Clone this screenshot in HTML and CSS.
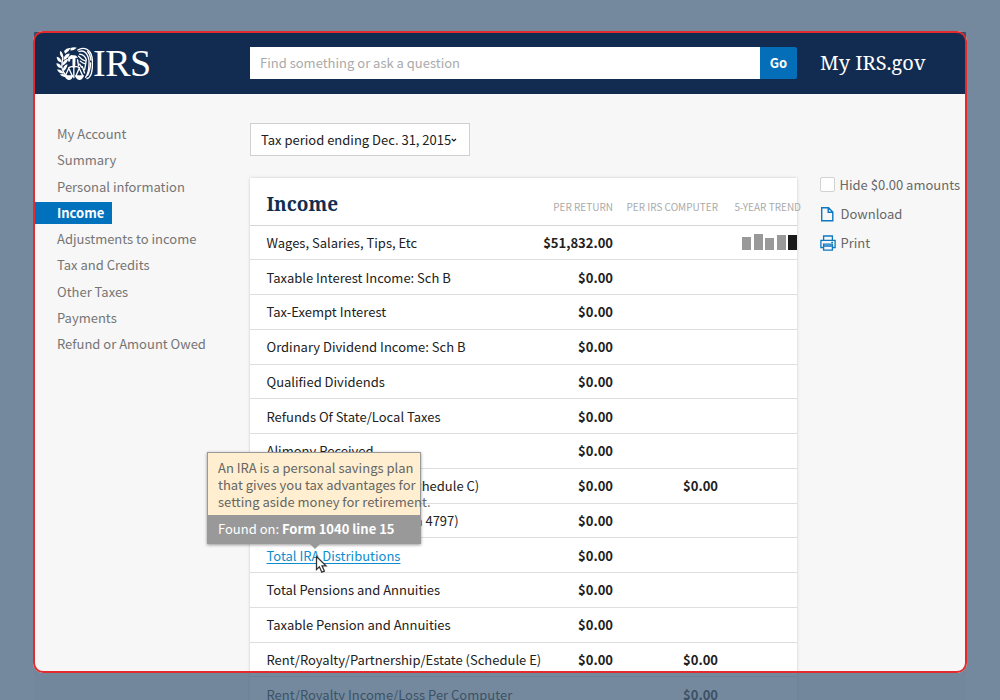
FILE: index.html
```html
<!DOCTYPE html>
<html lang="en">
<head>
<meta charset="utf-8">
<title>My IRS.gov – Income</title>
<link rel="stylesheet" href="styles.css">
</head>
<body>
<div class="page">
  <header class="header">
    <div class="logo">
      <svg class="eagle" viewBox="0 0 110 98" aria-hidden="true">
        <g fill="#fff">
          <path d="M43 3Q53-1 62 2Q53 11 43 10Z"/><path d="M24 12Q32 1 43 3Q39 14 27 20Z"/>
          <path d="M12 12Q23 17 21 34Q9 27 12 12Z"/><path d="M2 29Q14 31 18 46Q3 46 2 29Z"/>
          <path d="M1 48Q13 48 19 62Q3 64 1 48Z"/><path d="M3 67Q14 64 25 78Q10 82 3 67Z"/>
          <path d="M23 32Q28 19 41 19Q39 32 22 39Z"/><path d="M19 50Q24 37 36 35Q35 47 19 56Z"/>
          <path d="M20 66Q24 53 34 51Q34 62 23 72Z"/><path d="M11 82Q24 77 35 86Q24 94 11 82Z"/>
          <path d="M36 31L45 24L59 25L65 32L58 33L57 61H49V35L42 36V43H36Z"/>
        </g>
        <g fill="none" stroke="#fff" stroke-width="4" stroke-linecap="round">
          <path d="M65 9Q78 0 92 7Q104 14 107 30Q111 55 105 79Q101 91 92 94"/>
          <path d="M68 13Q84 8 92 22Q100 35 98 55Q97 77 88 90"/>
          <path d="M70 21Q85 22 90 37Q88 55 85 67"/>
          <path d="M67 27Q76 38 87 41M72 42Q78 48 87 50M94 13Q102 22 104 39M103 47Q101 70 94 84"/>
          <path d="M20 29L17 60Q22 79 33 87"/>
          <path d="M38 61Q53 54 70 61M53 56V91M38 63L27 87M38 63L49 87M69 63L59 87M69 63L80 87"/>
          <path d="M64 38L67 56M70 51L76 60M78 58L85 77"/>
        </g>
        <path fill="#fff" d="M25 84H51Q49 98 38 98Q28 97 25 84ZM57 84H83Q80 98 69 98Q59 97 57 84Z"/>
      </svg>
      <span class="logo-text">IRS</span>
    </div>
    <form class="search"><span class="search-field">Find something or ask a question</span><span class="go">Go</span></form>
    <div class="site-name">My IRS.gov</div>
  </header>
  <div class="columns">
    <nav class="nav">
      <a>My Account</a><a>Summary</a><a>Personal information</a><a class="active">Income</a><a>Adjustments to income</a><a>Tax and Credits</a><a>Other Taxes</a><a>Payments</a><a>Refund or Amount Owed</a>
    </nav>
    <main class="main">
      <div class="period"><span>Tax period ending Dec. 31, 2015</span>
        <svg width="14" height="10" viewBox="0 0 14 10"><path d="M1.8 2.2L7 7.2L12.2 2.2" fill="none" stroke="#111" stroke-width="3"/></svg>
      </div>
      <section class="card">
        <div class="card-head"><h1>Income</h1><span>PER RETURN</span><span>PER IRS COMPUTER</span><span>5-YEAR TREND</span></div>
        <div class="row"><span>Wages, Salaries, Tips, Etc</span><b>$51,832.00</b><b></b>
          <i class="trend"><i class="bar h1"></i><i class="bar h2"></i><i class="bar h3"></i><i class="bar h4"></i><i class="bar h4 now"></i></i></div>
        <div class="row"><span>Taxable Interest Income: Sch B</span><b>$0.00</b></div>
        <div class="row"><span>Tax-Exempt Interest</span><b>$0.00</b></div>
        <div class="row"><span>Ordinary Dividend Income: Sch B</span><b>$0.00</b></div>
        <div class="row"><span>Qualified Dividends</span><b>$0.00</b></div>
        <div class="row"><span>Refunds Of State/Local Taxes</span><b>$0.00</b></div>
        <div class="row"><span>Alimony Received</span><b>$0.00</b></div>
        <div class="row"><span>Business Income/Loss (Schedule C)</span><b>$0.00</b><b>$0.00</b></div>
        <div class="row"><span>Other Gains/Losses (Form 4797)</span><b>$0.00</b></div>
        <div class="row"><span class="link">Total IRA Distributions</span><b>$0.00</b></div>
        <div class="row"><span>Total Pensions and Annuities</span><b>$0.00</b></div>
        <div class="row"><span>Taxable Pension and Annuities</span><b>$0.00</b></div>
        <div class="row"><span>Rent/Royalty/Partnership/Estate (Schedule E)</span><b>$0.00</b><b>$0.00</b></div>
        <div class="row"><span>Rent/Royalty Income/Loss Per Computer</span><b></b><b>$0.00</b></div>
      </section>
    </main>
    <aside class="tools">
      <div class="tool"><i class="check"></i>Hide $0.00 amounts</div>
      <div class="tool"><svg width="16" height="16" viewBox="0 0 16 16" fill="none" stroke="#0e78c2" stroke-width="1.4"><path d="M1.7 1.7H8.5L12.8 6V14.8H1.7ZM8.2 1.7V6.2H12.8"/></svg>Download</div>
      <div class="tool"><svg width="16" height="16" viewBox="0 0 16 16" fill="none" stroke="#0e78c2" stroke-width="1.3"><path d="M3.6 5V1H12.4V5M3.6 12.5H.9V5.3H15.1V12.5H12.4M3.6 9.1H12.4V15.2H3.6ZM3.6 11H12.4M11.3 7.3H13"/></svg>Print</div>
    </aside>
  </div>
  <div class="tooltip">
    <div class="tip-body">An IRA is a personal savings plan<br>that gives you tax advantages for<br>setting aside money for retirement.</div>
    <div class="tip-foot">Found on: <b>Form 1040 line 15</b></div>
  </div>
  <svg class="cursor" width="14" height="20" viewBox="0 0 14 20"><path d="M1.5 1.5V14.5L4.4 11.8L6.8 17.2L9.4 16.1L7 10.8H11Z" fill="#fff" stroke="#333" stroke-width="1.3"/></svg>
  <div class="frame"></div>
</div>
</body>
</html>
```

FILE: styles.css
```css
* { box-sizing: border-box; }
body { margin: 0; background: #fff; font: 13px/17px "Noto Sans CJK SC", "Noto Sans", sans-serif; color: #212121; }
.page { position: relative; width: 1000px; height: 700px; overflow: hidden; padding: 32px 34px 0; background: #fff; }
.header { height: 62px; background: #122c51; display: flex; align-items: center; box-shadow: 0 1px 0 #c9ced8; }
.logo { width: 216px; padding-left: 22px; display: flex; align-items: center; }
.eagle { width: 37px; height: 33px; }
.logo-text { font: 38px/34px "Liberation Serif", serif; color: #fff; letter-spacing: -0.5px; }
.search { width: 547px; height: 32px; display: flex; margin: 0; }
.search-field { flex: 1; background: #fff; color: #aaa; padding: 0 10px; line-height: 31px; }
.go { width: 37px; background: #046fb8; color: #fff; font-weight: 700; text-align: center; line-height: 31px; border-radius: 0 2px 2px 0; }
.site-name { margin-left: 23px; font: 20px/26px "Noto Serif", "DejaVu Serif Condensed", "DejaVu Serif", serif; color: #fff; white-space: nowrap; }
.columns { display: flex; background: #f7f7f7; height: 620px; }
.nav { width: 216px; padding-top: 29px; display: flex; flex-direction: column; align-items: flex-start; }
.nav a { height: 22px; margin-bottom: 4.25px; padding: 0 8px 0 23px; line-height: 22px; color: #757575; white-space: nowrap; flex: none; }
.nav .active { background: #0071bc; color: #fff; font-weight: 700; }
.main { width: 547px; padding-top: 29px; }
.period { width: 220px; height: 33px; border: 1px solid #d0d0d0; background: #fff; display: flex; align-items: center; justify-content: space-between; padding: 0 12px 0 10px; white-space: nowrap; }
.card { margin-top: 22px; background: #fff; box-shadow: 0 0 3px rgba(0,0,0,.18); }
.card-head, .row { display: grid; grid-template-columns: 246.5px 100px 105px 79px; padding-left: 16.5px; align-items: center; white-space: nowrap; }
.card-head { height: 47.5px; border-bottom: 1px solid #d5d5d5; }
.card-head h1 { margin: 5px 0 0; font: 700 19px/26px "Noto Serif", "DejaVu Serif Condensed", "DejaVu Serif", serif; color: #112e51; }
.card-head span { font-size: 10px; color: #aaa; text-align: right; padding-top: 11px; display: flex; justify-content: flex-end; }
.card-head span:last-child { margin-right: -4px; }
.row { height: 34.75px; border-bottom: 1px solid #dedede; }
.row b { text-align: right; font-weight: 600; }
.link { color: #0e8ccd; text-decoration: underline; text-underline-offset: 2px; }
.trend { display: flex; align-items: flex-end; justify-content: flex-end; gap: 2.7px; height: 16px; }
.bar { width: 8.8px; background: #999; }
.h1 { height: 13px; }
.h2 { height: 16px; }
.h3 { height: 12px; }
.h4 { height: 15px; }
.now { background: #191919; }
.tools { padding: 79px 0 0 23px; color: #686868; }
.tool { height: 29.2px; display: flex; align-items: center; gap: 4.5px; line-height: 22px; padding-bottom: 6px; white-space: nowrap; }
.check { width: 15px; height: 15px; border: 1px solid #d2d2d2; border-radius: 2px; background: #fff; }
.tooltip { position: absolute; left: 207px; top: 452px; width: 214px; height: 92px; border: 1px solid #999; background: #999; box-shadow: 0 1px 3px rgba(0,0,0,.4); }
.tooltip::after { content: ""; position: absolute; left: 101px; top: 90px; border: 6px solid transparent; border-top-color: #999; border-bottom: 0; }
.tip-body { height: 62px; padding: 6px 10px; background: #ffefd0; color: #656565; white-space: nowrap; }
.tip-foot { padding-left: 10px; line-height: 28px; color: #fff; }
.cursor { position: absolute; left: 315px; top: 555px; }
.frame { position: absolute; left: 33px; top: 31px; width: 934px; height: 641.5px; border: 2px solid #e52a2e; border-radius: 10px; box-shadow: 0 0 0 120px rgba(70,97,124,.75); }
```
